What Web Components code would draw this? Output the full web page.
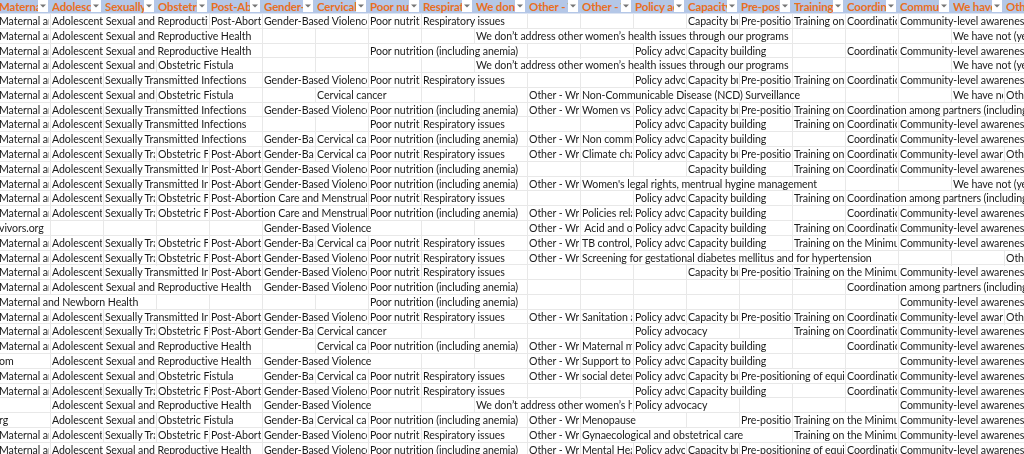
<!DOCTYPE html>
<html>
<head>
<meta charset="utf-8">
<title>Survey responses</title>
<style>
  html, body { margin: 0; height: 100%; overflow: hidden; background: #fff; }
</style>
</head>
<body>
<sheet-grid></sheet-grid>
<script>
const M = "Maternal and Newborn Health";
const A = "Adolescent Sexual and Reproductive Health";
const S = "Sexually Transmitted Infections";
const F = "Obstetric Fistula";
const PA = "Post-Abortion Care and Menstrual Health";
const G = "Gender-Based Violence";
const C = "Cervical cancer";
const P = "Poor nutrition (including anemia)";
const R = "Respiratory issues";
const W = "We don’t address other women’s health issues through our programs";
const O = "Other - Write in";
const PO = "Policy advocacy";
const CB = "Capacity building";
const PP = "Pre-positioning of equipment";
const T = "Training on the Minimum Initial Service Package";
const CO = "Coordination among partners (including";
const CL = "Community-level awareness";
const N = "We have not (yet)";
const X = "Other";
const _ = "";
// ">" means the cell is empty and the text on its left runs over it
const $ = ">";

const HEADERS = ["Maternal", "Adolescent", "Sexually", "Obstetric", "Post-Abortion", "Gender-Based", "Cervical", "Poor nutrition", "Respiratory", "We don’t", "Other - Write", "Other - Write", "Policy advocacy", "Capacity building", "Pre-positioning", "Training on", "Coordination", "Community", "We have not", "Other"];

const ROWS = [
  [M, A, $, $, PA, G, $, P, R, $, _, _, _, CB, PP, T, CO, CL, $, $],
  [M, A, $, $, $, _, _, _, _, W, $, $, $, $, $, _, _, _, N, $],
  [M, A, $, $, $, _, _, P, $, $, _, _, PO, CB, $, _, CO, CL, $, $],
  [M, A, $, F, $, _, _, _, _, W, $, $, $, $, $, _, _, _, N, $],
  [M, A, S, $, $, G, $, P, R, $, _, _, PO, CB, PP, T, CO, CL, $, $],
  [M, A, $, F, $, _, C, $, _, _, O, "Non-Communicable Disease (NCD) Surveillance", $, $, $, $, _, _, N, X],
  [M, A, S, $, $, G, $, P, $, $, O, "Women vs men", PO, CB, PP, T, CO, $, $, $],
  [M, A, S, $, $, _, _, P, R, $, _, _, PO, CB, $, T, CO, CL, $, $],
  [M, A, S, $, $, G, C, P, $, $, O, "Non communicable", PO, CB, $, _, CO, CL, $, $],
  [M, A, S, F, PA, G, C, P, R, $, O, "Climate change", PO, CB, PP, T, CO, CL, $, X],
  [M, A, S, $, PA, G, $, P, $, $, _, _, _, CB, $, T, CO, CL, $, $],
  [M, A, S, $, PA, G, $, P, $, $, O, "Women's legal rights, mentrual hygine management", $, $, $, $, _, _, N, $],
  [M, A, S, F, PA, $, $, P, R, $, _, _, PO, CB, $, T, CO, $, $, $],
  [M, A, S, F, PA, $, $, P, $, $, O, "Policies related", PO, CB, $, _, CO, CL, $, $],
  ["vivors.org", _, _, _, _, G, $, $, _, _, O, " Acid and other", PO, CB, $, T, CO, CL, $, $],
  [M, A, S, F, PA, G, C, P, R, $, O, "TB control, ", PO, CB, $, T, $, CL, $, $],
  [M, A, S, F, PA, G, $, P, R, $, O, "Screening for gestational diabetes mellitus and for hypertension", $, $, $, $, $, _, _, X],
  [M, A, S, $, PA, G, $, P, R, $, _, _, _, CB, PP, T, $, CL, $, $],
  [M, A, $, $, $, G, $, P, $, $, _, _, _, _, _, _, CO, $, $, $],
  [M, $, $, _, _, _, _, P, $, $, _, _, _, _, _, _, _, CL, $, $],
  [M, A, S, $, PA, G, $, P, R, $, O, "Sanitation and", PO, CB, PP, T, CO, CL, $, X],
  [M, A, S, F, PA, G, C, $, _, _, _, _, PO, $, _, T, CO, CL, $, $],
  [M, A, $, $, $, _, C, P, $, $, O, "Maternal mental", PO, CB, $, _, CO, CL, $, $],
  ["om", A, $, $, $, G, $, $, _, _, O, "Support to", PO, CB, $, _, _, CL, $, $],
  [M, A, $, F, $, G, C, P, R, $, O, "social determinants", PO, CB, PP, $, CO, CL, $, $],
  [M, A, S, F, PA, G, $, P, R, $, _, _, PO, CB, $, _, CO, CL, $, $],
  [_, A, $, $, $, G, $, $, _, W, $, $, PO, $, _, _, _, CL, $, $],
  ["rg", A, $, F, $, G, C, P, $, $, O, "Menopause", $, _, PP, T, $, CL, $, $],
  [M, A, S, F, PA, G, $, P, R, $, O, "Gynaecological and obstetrical care", $, $, $, T, $, CL, $, $],
  [M, A, $, $, $, G, $, P, $, $, O, "Mental Health", PO, CB, PP, $, CO, CL, $, $],
];

class SheetFilter extends HTMLElement {
  constructor() {
    super();
    this.attachShadow({ mode: "open" });
    this.shadowRoot.innerHTML = `
      <style>
        :host { display: flex; flex: none; width: 10px; height: 12px; background: #fff; align-items: center; justify-content: center; }
        svg { display: block; }
      </style>
      <svg width="6" height="4" viewBox="0 0 6 4"><path d="M0 0.5h6L3 3.5z" fill="#757575"/></svg>
    `;
  }
}
customElements.define("sheet-filter", SheetFilter);

class SheetHeader extends HTMLElement {
  constructor() {
    super();
    this.attachShadow({ mode: "open" });
    this.shadowRoot.innerHTML = `
      <style>
        :host { display: flex; width: 53px; height: 100%; box-sizing: border-box; padding: 0 3px 0 1px; align-items: flex-start; }
        .label { flex: 1; min-width: 0; overflow: hidden; white-space: nowrap; font-weight: 700; font-size: 11.5px; letter-spacing: -0.15px; color: #e96f1f; line-height: 13px; }
      </style>
      <div class="label"><slot></slot></div>
      <sheet-filter></sheet-filter>
    `;
  }
}
customElements.define("sheet-header", SheetHeader);

class SheetRow extends HTMLElement {
  constructor() {
    super();
    this.attachShadow({ mode: "open" });
    this.shadowRoot.innerHTML = `
      <style>
        :host { display: grid; grid-template-columns: repeat(20, 53px); height: 14.79px; box-sizing: border-box; border-bottom: 1px solid #e8e8e8; }
        .cell { box-sizing: border-box; min-width: 0; padding: 0 1px; border-right: 1px solid #e8e8e8; }
        .text { overflow: hidden; white-space: pre; line-height: 15px; height: 100%; color: #1a1a1a; }
      </style>
    `;
  }

  set cells(values) {
    values.forEach((value, i) => {
      if (value === $) return;
      let span = 1;
      while (values[i + span] === $) span++;
      const cell = document.createElement("div");
      cell.className = "cell";
      cell.style.gridColumn = `${i + 1} / span ${span}`;
      const text = document.createElement("div");
      text.className = "text";
      text.textContent = value;
      cell.appendChild(text);
      this.shadowRoot.appendChild(cell);
    });
  }
}
customElements.define("sheet-row", SheetRow);

class SheetGrid extends HTMLElement {
  constructor() {
    super();
    this.attachShadow({ mode: "open" });
    this.shadowRoot.innerHTML = `
      <style>
        :host { display: block; width: 1060px; margin-left: -2px; font: 10.6px Lato, "Liberation Sans", sans-serif; letter-spacing: -0.08px; filter: blur(0.25px); }
        .head { display: flex; height: 13px; background: #b4c7e7; border-bottom: 1px solid #dbe3f2; }
      </style>
      <div class="head"></div>
      <div class="body"></div>
    `;
    const head = this.shadowRoot.querySelector(".head");
    HEADERS.forEach((text) => {
      const cell = document.createElement("sheet-header");
      cell.textContent = text;
      head.appendChild(cell);
    });
    const body = this.shadowRoot.querySelector(".body");
    ROWS.forEach((values) => {
      const row = document.createElement("sheet-row");
      row.cells = values;
      body.appendChild(row);
    });
  }
}
customElements.define("sheet-grid", SheetGrid);
</script>
</body>
</html>
